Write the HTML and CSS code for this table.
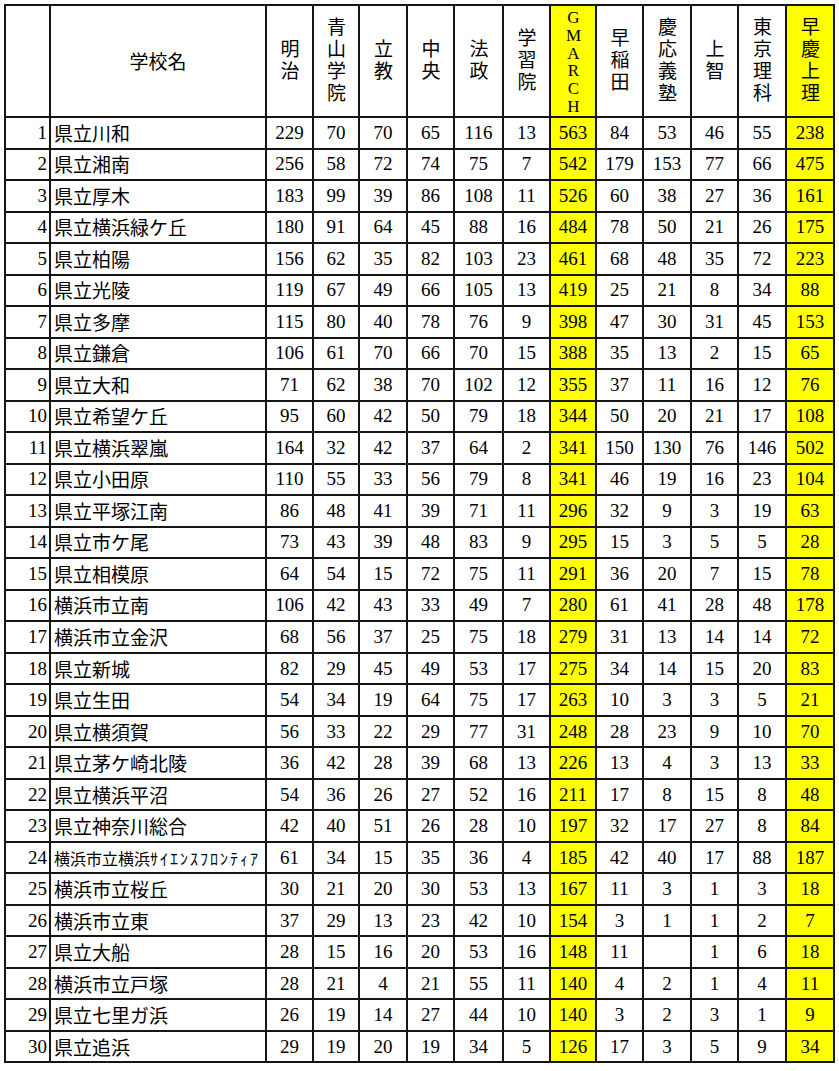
FILE: index.html
```html
<!DOCTYPE html>
<html lang="ja">
<head>
<meta charset="utf-8">
<link rel="stylesheet" href="styles.css">
</head>
<body>
<div class="page">
<table class="tbl">
<colgroup>
<col class="c-no"><col class="c-name">
<col class="c-n47"><col class="c-n46"><col class="c-n48"><col class="c-n47"><col class="c-n49"><col class="c-n47">
<col class="c-n46"><col class="c-n47"><col class="c-n48"><col class="c-n47"><col class="c-n48"><col class="c-n48">
</colgroup>
<thead>
<tr class="head">
<th></th>
<th class="h-name">学校名</th>
<th><span class="vt">明治</span></th>
<th><span class="vt">青山学院</span></th>
<th><span class="vt">立教</span></th>
<th><span class="vt">中央</span></th>
<th><span class="vt">法政</span></th>
<th><span class="vt">学習院</span></th>
<th class="y"><span class="vt latin">GMARCH</span></th>
<th><span class="vt">早稲田</span></th>
<th><span class="vt">慶応義塾</span></th>
<th><span class="vt">上智</span></th>
<th><span class="vt">東京理科</span></th>
<th class="y"><span class="vt">早慶上理</span></th>
</tr>
</thead>
<tbody>
<tr><td class="no">1</td><td class="name">県立川和</td><td>229</td><td>70</td><td>70</td><td>65</td><td>116</td><td>13</td><td class="y">563</td><td>84</td><td>53</td><td>46</td><td>55</td><td class="y">238</td></tr>
<tr><td class="no">2</td><td class="name">県立湘南</td><td>256</td><td>58</td><td>72</td><td>74</td><td>75</td><td>7</td><td class="y">542</td><td>179</td><td>153</td><td>77</td><td>66</td><td class="y">475</td></tr>
<tr><td class="no">3</td><td class="name">県立厚木</td><td>183</td><td>99</td><td>39</td><td>86</td><td>108</td><td>11</td><td class="y">526</td><td>60</td><td>38</td><td>27</td><td>36</td><td class="y">161</td></tr>
<tr><td class="no">4</td><td class="name">県立横浜緑ケ丘</td><td>180</td><td>91</td><td>64</td><td>45</td><td>88</td><td>16</td><td class="y">484</td><td>78</td><td>50</td><td>21</td><td>26</td><td class="y">175</td></tr>
<tr><td class="no">5</td><td class="name">県立柏陽</td><td>156</td><td>62</td><td>35</td><td>82</td><td>103</td><td>23</td><td class="y">461</td><td>68</td><td>48</td><td>35</td><td>72</td><td class="y">223</td></tr>
<tr><td class="no">6</td><td class="name">県立光陵</td><td>119</td><td>67</td><td>49</td><td>66</td><td>105</td><td>13</td><td class="y">419</td><td>25</td><td>21</td><td>8</td><td>34</td><td class="y">88</td></tr>
<tr><td class="no">7</td><td class="name">県立多摩</td><td>115</td><td>80</td><td>40</td><td>78</td><td>76</td><td>9</td><td class="y">398</td><td>47</td><td>30</td><td>31</td><td>45</td><td class="y">153</td></tr>
<tr><td class="no">8</td><td class="name">県立鎌倉</td><td>106</td><td>61</td><td>70</td><td>66</td><td>70</td><td>15</td><td class="y">388</td><td>35</td><td>13</td><td>2</td><td>15</td><td class="y">65</td></tr>
<tr><td class="no">9</td><td class="name">県立大和</td><td>71</td><td>62</td><td>38</td><td>70</td><td>102</td><td>12</td><td class="y">355</td><td>37</td><td>11</td><td>16</td><td>12</td><td class="y">76</td></tr>
<tr><td class="no">10</td><td class="name">県立希望ケ丘</td><td>95</td><td>60</td><td>42</td><td>50</td><td>79</td><td>18</td><td class="y">344</td><td>50</td><td>20</td><td>21</td><td>17</td><td class="y">108</td></tr>
<tr><td class="no">11</td><td class="name">県立横浜翠嵐</td><td>164</td><td>32</td><td>42</td><td>37</td><td>64</td><td>2</td><td class="y">341</td><td>150</td><td>130</td><td>76</td><td>146</td><td class="y">502</td></tr>
<tr><td class="no">12</td><td class="name">県立小田原</td><td>110</td><td>55</td><td>33</td><td>56</td><td>79</td><td>8</td><td class="y">341</td><td>46</td><td>19</td><td>16</td><td>23</td><td class="y">104</td></tr>
<tr><td class="no">13</td><td class="name">県立平塚江南</td><td>86</td><td>48</td><td>41</td><td>39</td><td>71</td><td>11</td><td class="y">296</td><td>32</td><td>9</td><td>3</td><td>19</td><td class="y">63</td></tr>
<tr><td class="no">14</td><td class="name">県立市ケ尾</td><td>73</td><td>43</td><td>39</td><td>48</td><td>83</td><td>9</td><td class="y">295</td><td>15</td><td>3</td><td>5</td><td>5</td><td class="y">28</td></tr>
<tr><td class="no">15</td><td class="name">県立相模原</td><td>64</td><td>54</td><td>15</td><td>72</td><td>75</td><td>11</td><td class="y">291</td><td>36</td><td>20</td><td>7</td><td>15</td><td class="y">78</td></tr>
<tr><td class="no">16</td><td class="name">横浜市立南</td><td>106</td><td>42</td><td>43</td><td>33</td><td>49</td><td>7</td><td class="y">280</td><td>61</td><td>41</td><td>28</td><td>48</td><td class="y">178</td></tr>
<tr><td class="no">17</td><td class="name">横浜市立金沢</td><td>68</td><td>56</td><td>37</td><td>25</td><td>75</td><td>18</td><td class="y">279</td><td>31</td><td>13</td><td>14</td><td>14</td><td class="y">72</td></tr>
<tr><td class="no">18</td><td class="name">県立新城</td><td>82</td><td>29</td><td>45</td><td>49</td><td>53</td><td>17</td><td class="y">275</td><td>34</td><td>14</td><td>15</td><td>20</td><td class="y">83</td></tr>
<tr><td class="no">19</td><td class="name">県立生田</td><td>54</td><td>34</td><td>19</td><td>64</td><td>75</td><td>17</td><td class="y">263</td><td>10</td><td>3</td><td>3</td><td>5</td><td class="y">21</td></tr>
<tr><td class="no">20</td><td class="name">県立横須賀</td><td>56</td><td>33</td><td>22</td><td>29</td><td>77</td><td>31</td><td class="y">248</td><td>28</td><td>23</td><td>9</td><td>10</td><td class="y">70</td></tr>
<tr><td class="no">21</td><td class="name">県立茅ケ崎北陵</td><td>36</td><td>42</td><td>28</td><td>39</td><td>68</td><td>13</td><td class="y">226</td><td>13</td><td>4</td><td>3</td><td>13</td><td class="y">33</td></tr>
<tr><td class="no">22</td><td class="name">県立横浜平沼</td><td>54</td><td>36</td><td>26</td><td>27</td><td>52</td><td>16</td><td class="y">211</td><td>17</td><td>8</td><td>15</td><td>8</td><td class="y">48</td></tr>
<tr><td class="no">23</td><td class="name">県立神奈川総合</td><td>42</td><td>40</td><td>51</td><td>26</td><td>28</td><td>10</td><td class="y">197</td><td>32</td><td>17</td><td>27</td><td>8</td><td class="y">84</td></tr>
<tr><td class="no">24</td><td class="name small">横浜市立横浜<span class="kana">ｻｲｴﾝｽﾌﾛﾝﾃｨｱ</span></td><td>61</td><td>34</td><td>15</td><td>35</td><td>36</td><td>4</td><td class="y">185</td><td>42</td><td>40</td><td>17</td><td>88</td><td class="y">187</td></tr>
<tr><td class="no">25</td><td class="name">横浜市立桜丘</td><td>30</td><td>21</td><td>20</td><td>30</td><td>53</td><td>13</td><td class="y">167</td><td>11</td><td>3</td><td>1</td><td>3</td><td class="y">18</td></tr>
<tr><td class="no">26</td><td class="name">横浜市立東</td><td>37</td><td>29</td><td>13</td><td>23</td><td>42</td><td>10</td><td class="y">154</td><td>3</td><td>1</td><td>1</td><td>2</td><td class="y">7</td></tr>
<tr><td class="no">27</td><td class="name">県立大船</td><td>28</td><td>15</td><td>16</td><td>20</td><td>53</td><td>16</td><td class="y">148</td><td>11</td><td></td><td>1</td><td>6</td><td class="y">18</td></tr>
<tr><td class="no">28</td><td class="name">横浜市立戸塚</td><td>28</td><td>21</td><td>4</td><td>21</td><td>55</td><td>11</td><td class="y">140</td><td>4</td><td>2</td><td>1</td><td>4</td><td class="y">11</td></tr>
<tr><td class="no">29</td><td class="name">県立七里ガ浜</td><td>26</td><td>19</td><td>14</td><td>27</td><td>44</td><td>10</td><td class="y">140</td><td>3</td><td>2</td><td>3</td><td>1</td><td class="y">9</td></tr>
<tr><td class="no">30</td><td class="name">県立追浜</td><td>29</td><td>19</td><td>20</td><td>19</td><td>34</td><td>5</td><td class="y">126</td><td>17</td><td>3</td><td>5</td><td>9</td><td class="y">34</td></tr>
</tbody>
</table>
</div>
</body>
</html>
```
FILE: styles.css
```css
html, body {
  margin: 0;
  padding: 0;
  background: #fff;
}
.page {
  padding: 4px 0 0 4px;
}
.tbl {
  border-collapse: collapse;
  table-layout: fixed;
  width: 831px;
  font-family: "Liberation Serif", "Noto Sans CJK JP", serif;
  font-size: 19px;
  color: #000;
}
.c-no { width: 45px; }
.c-name { width: 216px; }
.c-n46 { width: 46px; }
.c-n47 { width: 47px; }
.c-n48 { width: 48px; }
.c-n49 { width: 49px; }
.tbl th, .tbl td {
  border: 2px solid #151515;
  padding: 0;
  text-align: center;
  vertical-align: middle;
  overflow: hidden;
  white-space: nowrap;
}
.head th {
  height: 110px;
  font-family: "Noto Sans CJK JP", sans-serif;
  font-weight: normal;
  font-size: 19px;
  line-height: 24px;
}
.vt {
  display: inline-block;
  writing-mode: vertical-rl;
  text-orientation: upright;
  letter-spacing: 3px;
  line-height: 24px;
  vertical-align: middle;
}
.vt.latin {
  font-family: "Liberation Serif", serif;
  font-size: 17px;
  letter-spacing: -1.2px;
  line-height: 20px;
  max-height: 108px;
}
.tbl tbody tr {
  height: 31.53px;
}
.tbl td {
  line-height: 22px;
}
.tbl td.no {
  text-align: right;
  padding-right: 2px;
}
.tbl td.name {
  text-align: left;
  padding-left: 3px;
  font-family: "Noto Sans CJK JP", sans-serif;
  font-size: 19px;
}
.tbl td.name.small {
  font-size: 16px;
}
.kana {
  letter-spacing: 2px;
}
.y {
  background: #ffff00;
}
```
